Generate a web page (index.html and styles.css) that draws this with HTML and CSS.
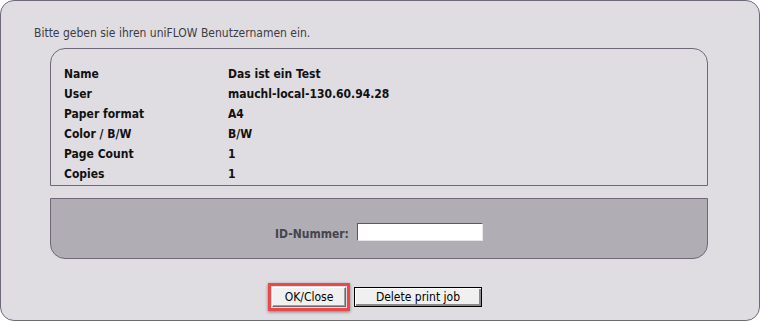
FILE: index.html
```html
<!DOCTYPE html>
<html lang="de">
<head>
    <meta charset="UTF-8">
    <title>uniFLOW - Benutzername</title>
    <link rel="stylesheet" href="styles.css">
</head>
<body>
    <div class="dialog">
        <p class="intro">Bitte geben sie ihren uniFLOW Benutzernamen ein.</p>

        <div class="job-box">
            <table class="job-info">
                <tr><td class="key">Name</td><td>Das ist ein Test</td></tr>
                <tr><td class="key">User</td><td>mauchl-local-130.60.94.28</td></tr>
                <tr><td class="key">Paper format</td><td>A4</td></tr>
                <tr><td class="key">Color / B/W</td><td>B/W</td></tr>
                <tr><td class="key">Page Count</td><td>1</td></tr>
                <tr><td class="key">Copies</td><td>1</td></tr>
            </table>
        </div>

        <div class="id-box">
            <label for="idnr">ID-Nummer:</label>
            <input type="text" id="idnr" class="id-field">
        </div>

        <div class="buttons">
            <span class="highlight"><button type="button" class="btn">OK/Close</button></span>
            <button type="button" class="btn btn-default">Delete print job</button>
        </div>
    </div>
</body>
</html>
```

FILE: styles.css
```css
body {
    margin: 0;
    background: #ffffff;
    font-family: "DejaVu Sans Condensed", "DejaVu Sans", sans-serif;
    font-size: 12px;
}
.dialog {
    width: 758px;
    height: 319px;
    background: #dfdde2;
    border: 1px solid #6f6878;
    border-radius: 14px;
}
.intro {
    margin: 0;
    padding: 24px 0 0 33px;
    line-height: 16px;
    color: #3c3c44;
}
.job-box {
    margin: 7px 51px 0 49px;
    height: 121px;
    padding-top: 15px;
    border: 1px solid #6f6878;
    border-radius: 15px 15px 0 0;
}
.job-info {
    border-collapse: collapse;
    margin-left: 13px;
    font-weight: bold;
    color: #111111;
}
.job-info td {
    height: 20px;
    padding: 0;
    line-height: 20px;
}
.job-info .key {
    width: 164px;
}
.id-box {
    margin: 12px 51px 0 49px;
    height: 61px;
    box-sizing: border-box;
    padding-top: 24px;
    background: #b0adb4;
    border: 1px solid #6f6878;
    border-radius: 0 0 15px 15px;
    display: flex;
    justify-content: center;
    align-items: flex-start;
    gap: 8px;
}
.id-box label {
    font-weight: bold;
    color: #46444c;
    line-height: 20px;
    margin-top: 1px;
}
.id-field {
    width: 120px;
    height: 16px;
    padding: 0 2px;
    margin: 0;
    border: 1px solid;
    border-color: #5a5a5a #e6e6e6 #e6e6e6 #5a5a5a;
    background: #ffffff;
}
.buttons {
    margin-top: 24px;
    padding-right: 10px;
    display: flex;
    justify-content: center;
    align-items: center;
    gap: 4px;
}
.highlight {
    display: inline-flex;
    padding: 1px;
    border: 3px solid #e84a4c;
    box-shadow: 0 1px 3px rgba(0, 0, 0, 0.45);
}
.btn {
    height: 20px;
    margin: 0;
    padding: 0;
    font-family: inherit;
    font-size: 12px;
    color: #000000;
    background: #f0f0f0;
    border: 1px solid;
    border-color: #ffffff #6a6a6a #6a6a6a #ffffff;
    box-shadow: inset -1px -1px #a0a0a0;
    width: 74px;
}
.btn-default {
    width: 128px;
    border-color: #000000;
    box-shadow: inset 1px 1px #ffffff, inset -2px -2px #8a8a8a;
}
```
